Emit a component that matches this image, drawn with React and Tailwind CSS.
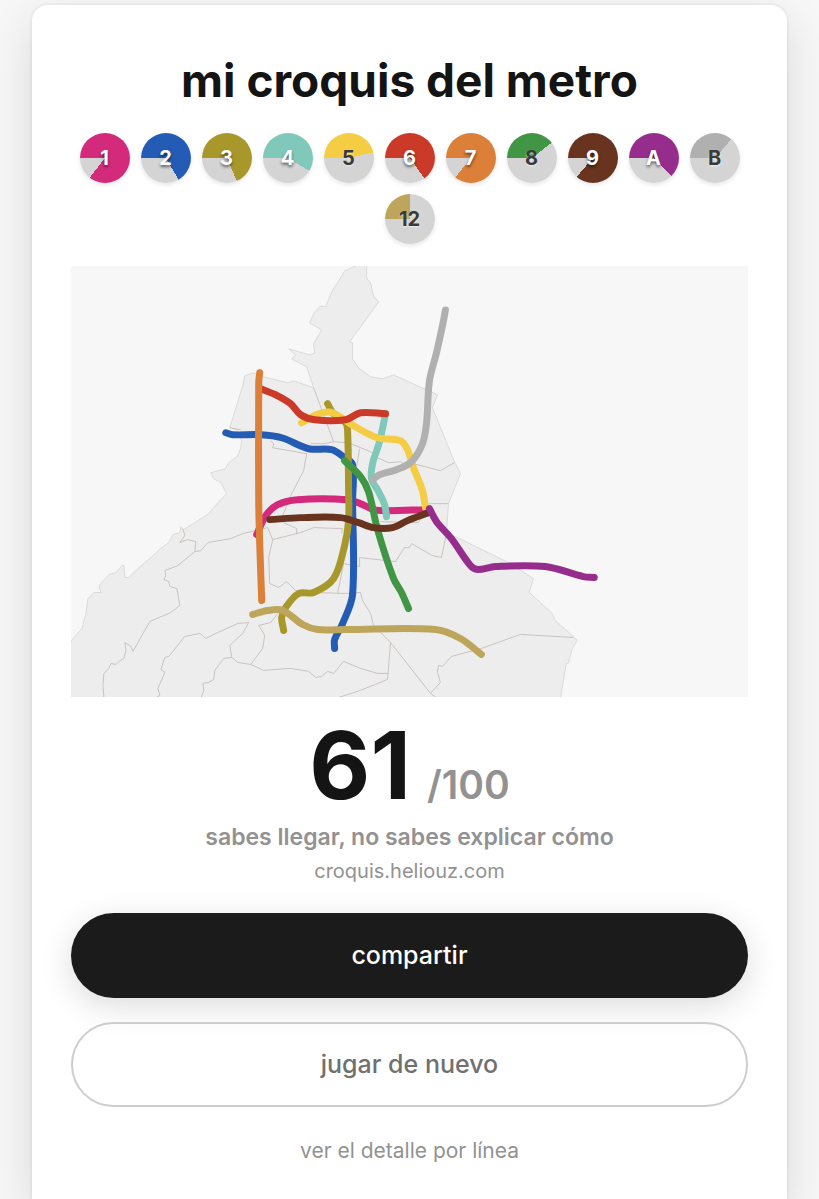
const LINES = [
  { id: "1", color: "#d42a7c", sweep: 308, light: true, points: [[256, 534], [265, 515], [277, 504], [297, 499], [347, 499], [360, 503], [373, 509], [388, 510], [424, 509]] },
  { id: "2", color: "#245cb5", sweep: 240, light: true, points: [[225, 432], [232, 434], [260, 434], [281, 437], [308, 448], [331, 449], [344, 457], [352, 464], [352, 500], [352, 594], [342, 623], [334, 639], [334, 648]] },
  { id: "3", color: "#a8982c", sweep: 247, light: true, points: [[327, 403], [333, 413], [345, 422], [347, 430], [348, 490], [348, 520], [344, 545], [333, 578], [313, 592], [298, 593], [285, 607], [281, 617], [283, 630]] },
  { id: "4", color: "#80c8ba", sweep: 211, light: true, points: [[385, 413], [379, 441], [372, 463], [371, 478], [378, 491], [384, 504], [386, 516]] },
  { id: "5", color: "#f5cd45", sweep: 167, light: false, points: [[301, 422], [318, 413], [332, 412], [353, 425], [377, 437], [400, 440], [407, 449], [413, 467], [422, 490], [425, 507]] },
  { id: "6", color: "#cb3a29", sweep: 235, light: true, points: [[260, 388], [277, 395], [290, 403], [300, 414], [314, 419], [345, 419], [360, 412], [385, 413]] },
  { id: "7", color: "#db7f39", sweep: 309, light: true, points: [[259, 372], [258, 382], [258, 500], [259, 543], [261, 600]] },
  { id: "8", color: "#419645", sweep: 142, light: false, points: [[344, 460], [360, 476], [368, 491], [377, 529], [393, 578], [401, 592], [408, 608]] },
  { id: "9", color: "#69341f", sweep: 311, light: true, points: [[269, 519], [300, 517], [340, 517], [358, 522], [373, 527], [392, 527], [407, 520], [428, 512]] },
  { id: "A", color: "#962d8d", sweep: 225, light: true, points: [[429, 508], [436, 521], [451, 538], [470, 565], [477, 569], [495, 566], [545, 566], [583, 576], [594, 577]] },
  { id: "B", color: "#b0b0b0", sweep: 131, light: false, points: [[445, 309], [443, 320], [436, 352], [429, 380], [426, 423], [422, 443], [411, 461], [396, 469], [379, 474], [372, 479]] },
  { id: "12", color: "#bda65c", sweep: 90, light: false, points: [[252, 614], [267, 610], [282, 610], [302, 624], [317, 629], [345, 629], [435, 629], [460, 638], [481, 654]] },
];

const LAND =
  "M366 264 L366 277 370 282 373 295 378 301 368 315 349 341 352 342 352 358 358 367 370 376 382 378 393 374 437 394 432 407 454 461 460 473 448 503 446 533 457 537 508 562 533 578 529 592 552 613 555 620 572 635 577 640 572 648 568 663 566 663 560 699 68 699 68 643 81 628 85 613 87 598 93 592 100 592 98 585 108 574 115 572 121 565 123 565 124 577 128 577 137 568 150 557 160 548 168 542 172 534 179 532 180 526 183 529 208 513 217 502 226 493 220 482 213 478 210 472 225 468 227 463 237 455 240 447 241 440 236 429 229 427 242 385 244 375 252 372 263 376 287 382 293 380 313 387 306 366 291 358 295 354 288 348 309 354 314 352 313 343 321 329 309 322 314 311 320 305 325 306 331 291 338 280 344 270 357 264 Z";

const BORDERS = [
  "M229 427 L240 429",
  "M313 387 L333 441",
  "M310 443 L323 443 333 441 348 442 370 451 377 457 388 462 400 461 405 464 413 463 440 470 454 462",
  "M359 448 L355 473 355 540",
  "M270 440 L273 443 272 447 306 453 303 470 290 495 282 515 283 522 296 528 296 533",
  "M182 528 L184 535 179 542 187 539 195 541 194 551 200 550 207 542 230 538 242 533 255 530 267 527 272 539 300 532 313 527 342 528 341 533",
  "M194 551 L177 565 164 570 165 575 163 579 168 581 169 586 176 588 179 605 170 612 149 621 132 651 130 646 124 642 125 650 123 658 118 661 115 664 110 663 108 668 103 673 102 685 103 698",
  "M248 622 L237 623 217 632 205 638 199 633 184 636 168 656 164 657 160 669 164 672 157 688 159 695 154 698",
  "M248 622 L242 633 229 645 231 657 237 662 250 664 263 670 290 668 308 671 315 677 321 676 327 671 333 673 343 661 360 668 377 673 388 673",
  "M231 657 L223 658 214 670 213 679 208 682 202 683 203 690 200 698",
  "M277 613 L270 622 258 625 264 635 262 648 250 664",
  "M272 539 L268 557 269 583 278 587 286 581 295 590 313 592 345 593 360 592 362 600 370 613 373 625 390 642 430 693 437 698",
  "M390 642 L387 679 360 690 335 698",
  "M430 693 L440 682 437 672 438 665 442 666 451 656 481 648 520 634 573 637",
  "M337 593 L343 563 359 566 359 557 395 561 404 547 409 547 411 543 432 555 441 557 446 533",
  "M428 503 L448 503",
  "M380 521 L418 522 424 512",
];

function smoothPath(points) {
  let d = `M${points[0][0]} ${points[0][1]}`;
  for (let i = 0; i < points.length - 1; i += 1) {
    const before = points[i - 1] ?? points[i];
    const from = points[i];
    const to = points[i + 1];
    const after = points[i + 2] ?? to;
    const reach = Math.hypot(to[0] - from[0], to[1] - from[1]) / 3;
    const startLength = Math.hypot(to[0] - before[0], to[1] - before[1]);
    const endLength = Math.hypot(after[0] - from[0], after[1] - from[1]);
    const x1 = from[0] + ((to[0] - before[0]) / startLength) * reach;
    const y1 = from[1] + ((to[1] - before[1]) / startLength) * reach;
    const x2 = to[0] - ((after[0] - from[0]) / endLength) * reach;
    const y2 = to[1] - ((after[1] - from[1]) / endLength) * reach;
    d += ` C${x1} ${y1} ${x2} ${y2} ${to[0]} ${to[1]}`;
  }
  return d;
}

function LineBadge({ line }) {
  const tone = line.light
    ? "text-white [text-shadow:0_2px_3px_rgba(0,0,0,0.55)]"
    : "text-[#3a3a3a] [text-shadow:0_1px_2px_rgba(255,255,255,0.6)]";
  return (
    <li
      className={`flex size-[50px] items-center justify-center rounded-full text-xl font-bold shadow-[0_2px_4px_rgba(0,0,0,0.1)] ${tone}`}
      style={{ background: `conic-gradient(from 270deg, ${line.color} ${line.sweep}deg, #d4d4d4 ${line.sweep}deg)` }}
    >
      {line.id}
    </li>
  );
}

function MetroMap() {
  return (
    <svg viewBox="70 265 678 432" className="mt-[22px] block w-full bg-[#f7f7f7]" role="img" aria-label="mapa">
      <path d={LAND} fill="#ededed" stroke="#dadada" strokeWidth="1" strokeLinejoin="round" />
      <g fill="none" stroke="#c9c3bf" strokeWidth="1" strokeLinejoin="round">
        {BORDERS.map((d) => (
          <path key={d} d={d} />
        ))}
      </g>
      <g fill="none" strokeWidth="7" strokeLinecap="round" strokeLinejoin="round">
        {LINES.map((line) => (
          <path key={line.id} d={smoothPath(line.points)} stroke={line.color} />
        ))}
      </g>
    </svg>
  );
}

export default function App() {
  return (
    <div className="flex min-h-screen flex-col bg-[#f7f7f7] px-8 pt-[5px] font-['Inter',sans-serif]">
      <main className="flex flex-1 flex-col items-center rounded-t-2xl bg-white px-[39px] pt-[45px] pb-8 text-center shadow-[0_0_0_2px_rgba(0,0,0,0.03),0_16px_48px_rgba(0,0,0,0.12)]">
        <h1 className="text-[46px] leading-[60px] font-bold text-[#141414]">mi croquis del metro</h1>
        <ul className="mt-[23px] flex flex-wrap justify-center gap-[11px]">
          {LINES.map((line) => (
            <LineBadge key={line.id} line={line} />
          ))}
        </ul>
        <MetroMap />
        <p className="mt-9 flex items-baseline justify-center gap-4 leading-[64px]">
          <span className="text-[94px] font-bold text-[#141414]">61</span>
          <span className="text-[39px] font-semibold text-[#929292]">/100</span>
        </p>
        <p className="mt-1 text-[23px] leading-8 font-semibold text-[#929292]">sabes llegar, no sabes explicar cómo</p>
        <p className="mt-1 text-xl leading-7 text-[#929292]">croquis.heliouz.com</p>
        <button className="mt-7 h-[85px] w-full rounded-full bg-[#1b1b1b] text-[25px] font-medium text-white shadow-[0_8px_32px_rgba(0,0,0,0.14)]">
          compartir
        </button>
        <button className="mt-6 h-[85px] w-full rounded-full border-2 border-[#cdcdcd] text-[25px] font-medium text-[#707070]">
          jugar de nuevo
        </button>
        <button className="mt-[30px] text-[21px] leading-7 text-[#929292]">ver el detalle por línea</button>
      </main>
    </div>
  );
}
